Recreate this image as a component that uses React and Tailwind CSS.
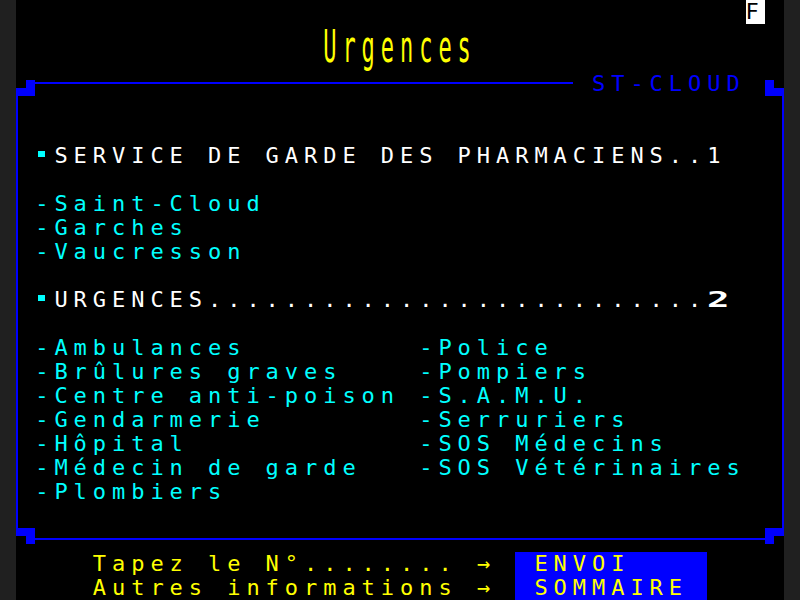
import React from 'react'

// écran minitel : 40 colonnes x 25 rangées, cellule 19.2 x 24
const BLUE = 'bg-[#0000ff]'

function Row({ children, className = '' }) {
  return <div className={`flex h-6 whitespace-pre ${className}`}>{children}</div>
}

function Bullet() {
  return (
    <span className="w-[19.2px] h-6 flex items-start">
      <span className="mt-[7px] ml-[3px] w-[7px] h-[6px] bg-[#00ffff]" />
    </span>
  )
}

// caractère mosaïque 2x3
function Mosaic({ cells }) {
  return (
    <span className="w-[19.2px] h-6 grid grid-cols-2 grid-rows-3">
      {cells.map((on, i) => (
        <span key={i} className={on ? BLUE : ''} />
      ))}
    </span>
  )
}

function HLine({ w }) {
  return (
    <span className={`h-6 ${w}`}>
      <span className={`block mt-[10px] h-[2px] ${BLUE}`} />
    </span>
  )
}

const left = ['-Ambulances', '-Brûlures graves', '-Centre anti-poison', '-Gendarmerie', '-Hôpital', '-Médecin de garde', '-Plombiers']
const right = ['-Police', '-Pompiers', '-S.A.M.U.', '-Serruriers', '-SOS Médecins', '-SOS Vétérinaires', '']

export default function App() {
  return (
    <div className="w-[800px] h-[600px] bg-[#202020] flex justify-center">
      <div className="w-[768px] h-[600px] bg-black font-['DejaVu_Sans_Mono',monospace] text-[22px] leading-6 tracking-[5.955px] overflow-hidden">
        <Row>
          <span>{' '.repeat(38)}</span>
          <span className="w-[19.2px] bg-white text-black">F</span>
        </Row>

        <div className="h-12 flex items-center whitespace-pre text-[#ffff00]">
          <span>{' '.repeat(16)}</span>
          <span className="inline-block scale-y-[2]">Urgences</span>
        </div>

        <Row>
          <Mosaic cells={[0, 0, 0, 1, 1, 1]} />
          <HLine w="w-[537.6px]" />
          <span className="text-[#0000ff]"> ST-CLOUD </span>
          <Mosaic cells={[0, 0, 1, 0, 1, 1]} />
        </Row>

        <div className="shadow-[inset_2px_0_0_#0000ff,inset_-2px_0_0_#0000ff]">
          <div className="h-6" />
          <div className="h-6" />
          <Row>
            <span> </span>
            <Bullet />
            <span className="text-white">SERVICE DE GARDE DES PHARMACIENS..1</span>
          </Row>
          <div className="h-6" />
          <Row className="text-[#00ffff]"> -Saint-Cloud</Row>
          <Row className="text-[#00ffff]"> -Garches</Row>
          <Row className="text-[#00ffff]"> -Vaucresson</Row>
          <div className="h-6" />
          <Row>
            <span> </span>
            <Bullet />
            <span className="text-white">{'URGENCES' + '.'.repeat(26)}</span>
            <span className="w-[19.2px] text-white">
              <span className="inline-block origin-left scale-x-[1.7] font-bold">2</span>
            </span>
          </Row>
          <div className="h-6" />
          {left.map((l, i) => (
            <Row key={i} className="text-[#00ffff]">{' ' + l.padEnd(20) + right[i]}</Row>
          ))}
          <div className="h-6" />
        </div>

        <Row>
          <Mosaic cells={[1, 1, 0, 1, 0, 0]} />
          <HLine w="w-[729.6px]" />
          <Mosaic cells={[1, 1, 1, 0, 0, 0]} />
        </Row>

        <Row className="text-[#ffff00]">
          <span>{'    Tapez le N°........ → '}</span>
          <span className={BLUE}>{' ENVOI    '}</span>
        </Row>
        <Row className="text-[#ffff00]">
          <span>{'    Autres informations → '}</span>
          <span className={BLUE}>{' SOMMAIRE '}</span>
        </Row>
      </div>
    </div>
  )
}
